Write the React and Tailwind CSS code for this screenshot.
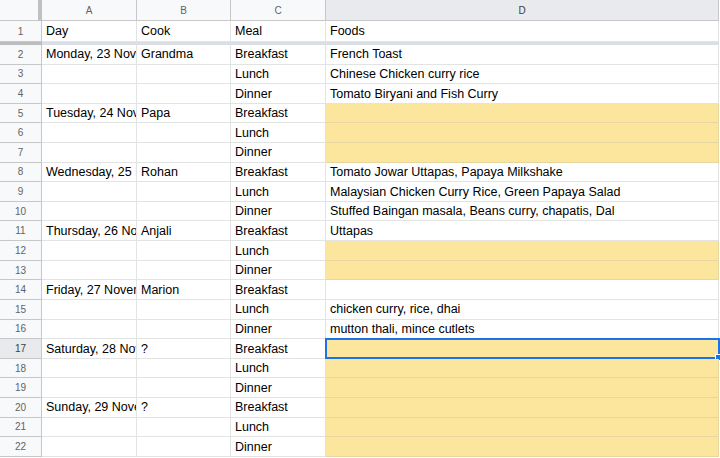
import React from 'react';

const rows = [
  ['Monday, 23 November', 'Grandma', 'Breakfast', 'French Toast'],
  ['', '', 'Lunch', 'Chinese Chicken curry rice'],
  ['', '', 'Dinner', 'Tomato Biryani and Fish Curry'],
  ['Tuesday, 24 November', 'Papa', 'Breakfast', null],
  ['', '', 'Lunch', null],
  ['', '', 'Dinner', null],
  ['Wednesday, 25 November', 'Rohan', 'Breakfast', 'Tomato Jowar Uttapas, Papaya Milkshake'],
  ['', '', 'Lunch', 'Malaysian Chicken Curry Rice, Green Papaya Salad'],
  ['', '', 'Dinner', 'Stuffed Baingan masala, Beans curry, chapatis, Dal'],
  ['Thursday, 26 November', 'Anjali', 'Breakfast', 'Uttapas'],
  ['', '', 'Lunch', null],
  ['', '', 'Dinner', null],
  ['Friday, 27 November', 'Marion', 'Breakfast', ''],
  ['', '', 'Lunch', 'chicken curry, rice, dhai'],
  ['', '', 'Dinner', 'mutton thali, mince cutlets'],
  ['Saturday, 28 November', '?', 'Breakfast', null],
  ['', '', 'Lunch', null],
  ['', '', 'Dinner', null],
  ['Sunday, 29 November', '?', 'Breakfast', null],
  ['', '', 'Lunch', null],
  ['', '', 'Dinner', null],
];

const font = { fontFamily: '"Liberation Sans", Arial, sans-serif' };

function Cell({ w, children, yellow, grow }) {
  return (
    <div
      className={
        'h-full flex items-center px-[4px] pt-[1px] overflow-hidden whitespace-nowrap text-[12.5px] text-[#000] border-r border-b ' +
        (grow ? 'flex-1 ' : 'shrink-0 ') +
        (yellow ? 'bg-[#fce59c] border-[#e6d69f]' : 'bg-white border-[#e2e3e3]')
      }
      style={w ? { width: w } : undefined}
    >
      {children}
    </div>
  );
}

function RowHead({ n, active }) {
  return (
    <div
      className={
        'w-[42px] shrink-0 h-full flex items-center justify-center text-[10px] border-r border-b border-[#c7c7c7] ' +
        (active ? 'bg-[#e8eaed] text-[#3c4043]' : 'bg-[#f8f9fa] text-[#5f6368]')
      }
    >
      {n}
    </div>
  );
}

export default function App() {
  return (
    <div className="w-[720px] h-[458px] overflow-hidden bg-white" style={font}>
      {/* column headers */}
      <div className="flex h-[21px]">
        <div className="w-[38px] shrink-0 h-full bg-[#f8f9fa] border-b border-[#c7c7c7]" />
        <div className="w-[4px] shrink-0 h-full bg-[#c0c0c0]" />
        {['A', 'B', 'C'].map((c, i) => (
          <div
            key={c}
            className={'shrink-0 h-full flex items-center justify-center text-[10px] text-[#5f6368] bg-[#f8f9fa] border-r border-b border-[#c7c7c7] ' + (i === 1 ? 'w-[94px]' : 'w-[95px]')}
          >
            {c}
          </div>
        ))}
        <div className="w-[393px] shrink-0 h-full flex items-center justify-center text-[10px] text-[#3c4043] bg-[#e8eaed] border-r border-b border-[#c7c7c7]">
          D
        </div>
        <div className="flex-1 bg-white" />
      </div>

      {/* header row 1 */}
      <div className="flex h-[21px]">
        <RowHead n={1} />
        <Cell w={95}>Day</Cell>
        <Cell w={94}>Cook</Cell>
        <Cell w={95}>Meal</Cell>
        <Cell w={393}>Foods</Cell>
      </div>
      <div className="flex h-[3px]">
        <div className="w-[42px] shrink-0 bg-[#bdbdbd]" />
        <div className="w-[677px] shrink-0 bg-[#dadfe6]" />
      </div>

      {rows.map((r, i) => {
        const n = i + 2;
        const selected = n === 17;
        return (
          <div key={n} className="flex h-[19.62px]">
            <RowHead n={n} active={selected} />
            <Cell w={95}>{r[0]}</Cell>
            <Cell w={94}>{r[1]}</Cell>
            <Cell w={95}>{r[2]}</Cell>
            <div className="relative w-[393px] shrink-0 h-full">
              <Cell w={393} yellow={r[3] === null}>{r[3]}</Cell>
              {selected && (
                <div className="absolute left-[-1px] top-[-1px] right-[-1px] bottom-0 border-2 border-[#1a73e8]">
                  <div className="absolute right-[-4px] bottom-[-4px] w-[7px] h-[7px] bg-[#1a73e8] border border-white" />
                </div>
              )}
            </div>
          </div>
        );
      })}
    </div>
  );
}
